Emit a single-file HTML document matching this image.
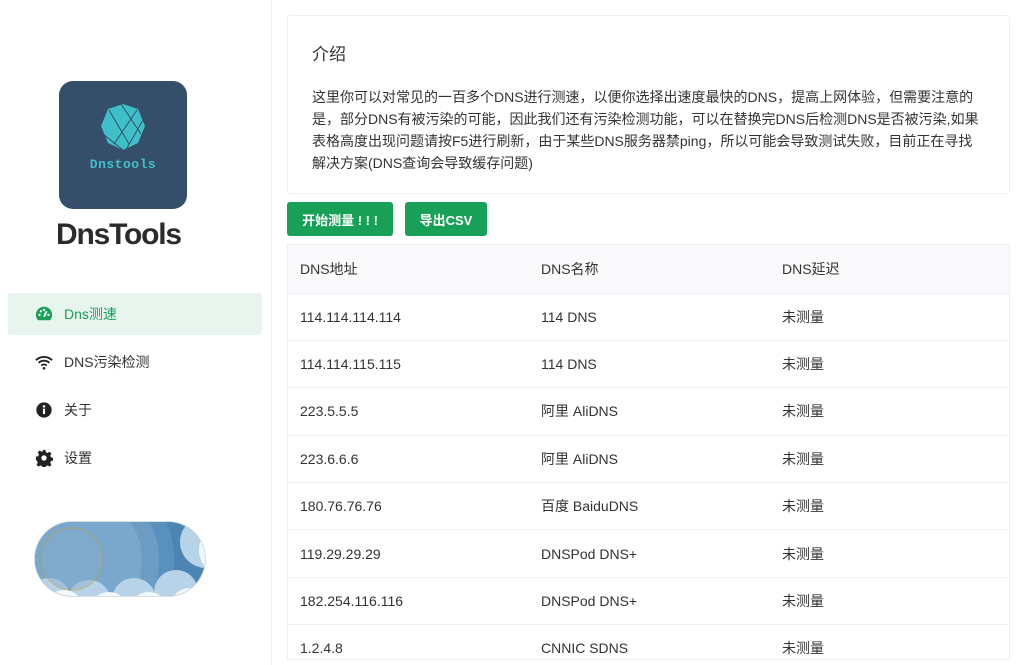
<!DOCTYPE html>
<html><head><meta charset="utf-8"><style>
*{box-sizing:border-box;margin:0;padding:0}
body{width:1025px;height:665px;overflow:hidden;background:#fff;font-family:"Liberation Sans","Noto Sans CJK SC",sans-serif;color:#333;position:relative}
.side{position:absolute;left:0;top:0;width:272px;height:665px;border-right:1px solid #eee}
.logo{position:absolute;left:59px;top:81px;width:128px;height:128px;border-radius:14px;background:#354f6b}
.logo .t{position:absolute;top:76px;width:100%;text-align:center;font-family:"Liberation Mono",monospace;font-weight:bold;font-size:13px;color:#3fc0c8;letter-spacing:0.5px}
.brand{position:absolute;left:56px;top:218px;font-size:30px;font-weight:bold;color:#2b2b2b;letter-spacing:-1.2px}
.nav{position:absolute;left:8px;width:254px;height:42px;font-size:14px;display:flex;align-items:center;padding-left:27px;color:#333}
.nav svg{width:18px;height:18px;margin-right:11px}
.nav.act{background:#e8f4ee;color:#18a058;border-radius:3px}
.card{position:absolute;left:287px;top:15px;width:723px;height:179px;border:1px solid #efeff5;border-radius:3px}
.card h3{position:absolute;left:24px;top:24px;font-size:17px;font-weight:normal;color:#333}
.card p{position:absolute;left:24px;top:70px;width:668px;font-size:14px;line-height:22px;color:#333}
.btn{position:absolute;top:202px;height:34px;background:#18a058;color:#fff;font-size:13px;font-weight:bold;border-radius:3px;display:flex;align-items:center;justify-content:center}
table{width:723px;border-collapse:collapse;font-size:14px}
td{height:47.4px;border-bottom:1px solid #efeff5;padding-left:12px;color:#333}
tr.h td{background:#fafafc;height:48px}
.clip{position:absolute;left:287px;top:244px;width:723px;height:416px;overflow:hidden;border:1px solid #efeff5}
</style></head><body>
<div class="side">
<div class="logo">
<svg style="position:absolute;left:42px;top:23px" width="44" height="46" viewBox="0 0 44 46"><polygon points="22,0 37,5 44,22 37,39 22,46 7,39 0,22 7,5" fill="#3fc0c8"/><path d="M20,0 L40,30 M2,30 L22,46 M36,6 L13,40 M42,16 L26,44 M8,6 L28,40" stroke="#354f6b" stroke-width="1" fill="none"/></svg>
<div class="t">Dnstools</div></div>
<div class="brand">DnsTools</div>
<div class="nav act" style="top:293px"><svg viewBox="0 0 20 20"><path d="M10 2A9 9 0 0 0 1 11c0 2.5 1 4.5 2.5 6h13c1.5-1.5 2.5-3.5 2.5-6A9 9 0 0 0 10 2z" fill="#18a058"/><circle cx="5" cy="11" r="1.3" fill="#fff"/><circle cx="6.5" cy="7" r="1.3" fill="#fff"/><circle cx="10" cy="5.5" r="1.3" fill="#fff"/><circle cx="15" cy="11" r="1.3" fill="#fff"/><path d="M10 13L13 7" stroke="#fff" stroke-width="2"/></svg>Dns测速</div>
<div class="nav" style="top:341px"><svg viewBox="0 0 20 20"><path d="M1 8a13 13 0 0 1 18 0M4 11a8.5 8.5 0 0 1 12 0M7 14a4 4 0 0 1 6 0" stroke="#222" stroke-width="2" fill="none"/><circle cx="10" cy="17" r="1.5" fill="#222"/></svg>DNS污染检测</div>
<div class="nav" style="top:389px"><svg viewBox="0 0 20 20"><circle cx="10" cy="10" r="8.5" fill="#222"/><rect x="8.8" y="8.5" width="2.4" height="6" fill="#fff"/><circle cx="10" cy="6" r="1.4" fill="#fff"/></svg>关于</div>
<div class="nav" style="top:437px"><svg viewBox="0 0 20 20"><path d="M8.5 1h3l.5 2.5 2 .9 2.2-1.4 2.1 2.1-1.4 2.2.9 2 2.5.5v3l-2.5.5-.9 2 1.4 2.2-2.1 2.1-2.2-1.4-2 .9-.5 2.5h-3l-.5-2.5-2-.9-2.2 1.4-2.1-2.1 1.4-2.2-.9-2L1 11.5v-3l2.5-.5.9-2L3 3.8 5.1 1.7 7.3 3.1l2-.9z" fill="#222"/><circle cx="10" cy="10" r="3" fill="#fff"/></svg>设置</div>
<svg style="position:absolute;left:34px;top:520px" width="172" height="78" viewBox="0 0 172 78">
<defs><clipPath id="c"><rect x="1" y="2" width="170" height="74" rx="37"/></clipPath></defs>
<rect x="0" y="1" width="172" height="76" rx="38" fill="#ddd"/>
<g clip-path="url(#c)"><rect width="172" height="78" fill="#4c84b4"/>
<circle cx="40" cy="40" r="100" fill="#5a90bc"/><circle cx="40" cy="40" r="85" fill="#6a9cc4"/><circle cx="40" cy="40" r="68" fill="#79a8cc"/>
<circle cx="172" cy="22" r="26" fill="#b6d3e8"/><circle cx="192" cy="30" r="27" fill="#f2f9fd"/>
<circle cx="15" cy="80" r="22" fill="#b6d3e8"/><circle cx="55" cy="82" r="22" fill="#b6d3e8"/><circle cx="100" cy="80" r="22" fill="#b6d3e8"/><circle cx="142" cy="72" r="22" fill="#b6d3e8"/>
<circle cx="30" cy="90" r="20" fill="#f2f9fd"/><circle cx="75" cy="92" r="20" fill="#f2f9fd"/><circle cx="115" cy="92" r="20" fill="#f2f9fd"/><circle cx="155" cy="86" r="18" fill="#f2f9fd"/>
<circle cx="38" cy="39" r="31" fill="#88aecb" opacity=".45" stroke="#b99b50" stroke-width="1.5"/></g></svg>
</div>
<div class="card"><h3>介绍</h3><p>这里你可以对常见的一百多个DNS进行测速，以便你选择出速度最快的DNS，提高上网体验，但需要注意的是，部分DNS有被污染的可能，因此我们还有污染检测功能，可以在替换完DNS后检测DNS是否被污染,如果表格高度出现问题请按F5进行刷新，由于某些DNS服务器禁ping，所以可能会导致测试失败，目前正在寻找解决方案(DNS查询会导致缓存问题)</p></div>
<div class="btn" style="left:287px;width:106px">开始测量 ! ! !</div>
<div class="btn" style="left:405px;width:82px">导出CSV</div>
<div class="clip"><table>
<tr class="h"><td style="width:241px">DNS地址</td><td style="width:241px">DNS名称</td><td>DNS延迟</td></tr>
<tr><td>114.114.114.114</td><td>114 DNS</td><td>未测量</td></tr>
<tr><td>114.114.115.115</td><td>114 DNS</td><td>未测量</td></tr>
<tr><td>223.5.5.5</td><td>阿里 AliDNS</td><td>未测量</td></tr>
<tr><td>223.6.6.6</td><td>阿里 AliDNS</td><td>未测量</td></tr>
<tr><td>180.76.76.76</td><td>百度 BaiduDNS</td><td>未测量</td></tr>
<tr><td>119.29.29.29</td><td>DNSPod DNS+</td><td>未测量</td></tr>
<tr><td>182.254.116.116</td><td>DNSPod DNS+</td><td>未测量</td></tr>
<tr><td>1.2.4.8</td><td>CNNIC SDNS</td><td>未测量</td></tr>
</table></div>
</body></html>
